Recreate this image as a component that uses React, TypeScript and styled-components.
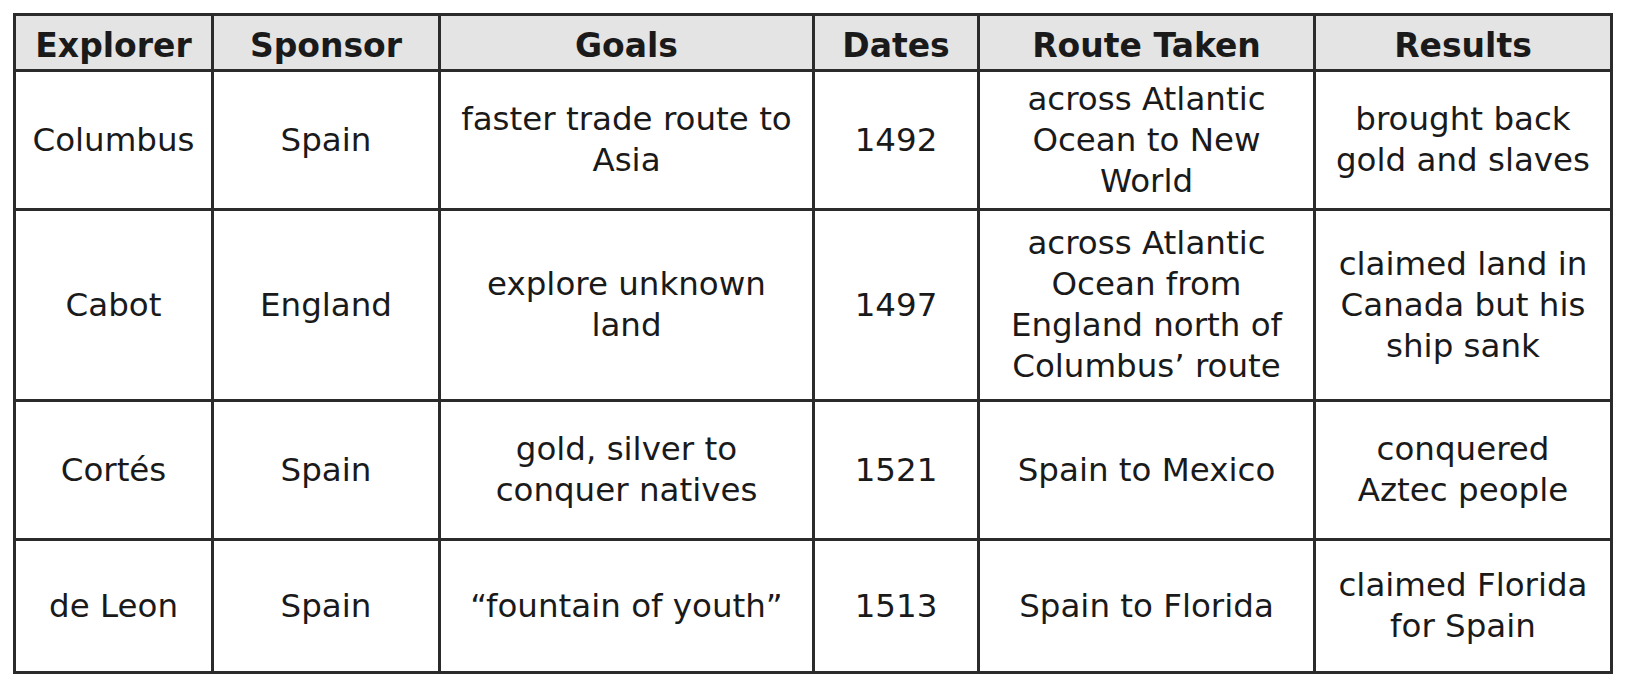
import React from 'react';
import styled, { createGlobalStyle } from 'styled-components';

const GlobalStyle = createGlobalStyle`
  html, body {
    margin: 0;
    padding: 0;
    background: #fff;
  }
`;

type Row = {
  explorer: string;
  sponsor: string;
  goals: string[];
  dates: string;
  route: string[];
  results: string[];
};

const columns = [
  { title: 'Explorer', width: 198 },
  { title: 'Sponsor', width: 227 },
  { title: 'Goals', width: 374 },
  { title: 'Dates', width: 165 },
  { title: 'Route Taken', width: 336 },
  { title: 'Results', width: 297 },
];

const rows: Row[] = [
  {
    explorer: 'Columbus',
    sponsor: 'Spain',
    goals: ['faster trade route to', 'Asia'],
    dates: '1492',
    route: ['across Atlantic', 'Ocean to New', 'World'],
    results: ['brought back', 'gold and slaves'],
  },
  {
    explorer: 'Cabot',
    sponsor: 'England',
    goals: ['explore unknown', 'land'],
    dates: '1497',
    route: ['across Atlantic', 'Ocean from', 'England north of', 'Columbus\u2019 route'],
    results: ['claimed land in', 'Canada but his', 'ship sank'],
  },
  {
    explorer: 'Cortés',
    sponsor: 'Spain',
    goals: ['gold, silver to', 'conquer natives'],
    dates: '1521',
    route: ['Spain to Mexico'],
    results: ['conquered', 'Aztec people'],
  },
  {
    explorer: 'de Leon',
    sponsor: 'Spain',
    goals: ['\u201Cfountain of youth\u201D'],
    dates: '1513',
    route: ['Spain to Florida'],
    results: ['claimed Florida', 'for Spain'],
  },
];

const rowHeights = [139, 191, 139, 133];

const Lines = ({ lines }: { lines: string[] }) => (
  <>
    {lines.map((line, i) => (
      <React.Fragment key={i}>
        {i > 0 && <br />}
        {line}
      </React.Fragment>
    ))}
  </>
);

const App = () => (
  <>
    <GlobalStyle />
    <Page>
      <Table>
        <colgroup>
          {columns.map((col) => (
            <col key={col.title} style={{ width: col.width }} />
          ))}
        </colgroup>
        <thead>
          <tr>
            {columns.map((col) => (
              <HeadCell key={col.title}>{col.title}</HeadCell>
            ))}
          </tr>
        </thead>
        <tbody>
          {rows.map((row, index) => (
            <BodyRow key={row.explorer} $height={rowHeights[index]}>
              <Cell>{row.explorer}</Cell>
              <Cell>{row.sponsor}</Cell>
              <Cell>
                <Lines lines={row.goals} />
              </Cell>
              <Cell>{row.dates}</Cell>
              <Cell>
                <Lines lines={row.route} />
              </Cell>
              <Cell>
                <Lines lines={row.results} />
              </Cell>
            </BodyRow>
          ))}
        </tbody>
      </Table>
    </Page>
  </>
);

export default App;

const Page = styled.div`
  padding: 13px 0 0 13px;
  font-family: 'DejaVu Sans', Lato, sans-serif;
  color: #1a1a1a;
`;

const Table = styled.table`
  border-collapse: collapse;
  table-layout: fixed;
  width: 1597px;
  border: 3px solid #2b2b2b;
`;

const HeadCell = styled.th`
  height: 47px;
  padding: 6px 0 0;
  background: #e4e4e4;
  border: 3px solid #2b2b2b;
  font-size: 33px;
  font-weight: 700;
  text-align: center;
  vertical-align: middle;
  line-height: 1;
`;

const BodyRow = styled.tr<{ $height: number }>`
  height: ${(p) => p.$height}px;
`;

const Cell = styled.td`
  padding: 0 2px;
  border: 3px solid #2b2b2b;
  font-size: 32.5px;
  line-height: 41px;
  text-align: center;
  vertical-align: middle;
  white-space: nowrap;
`;
